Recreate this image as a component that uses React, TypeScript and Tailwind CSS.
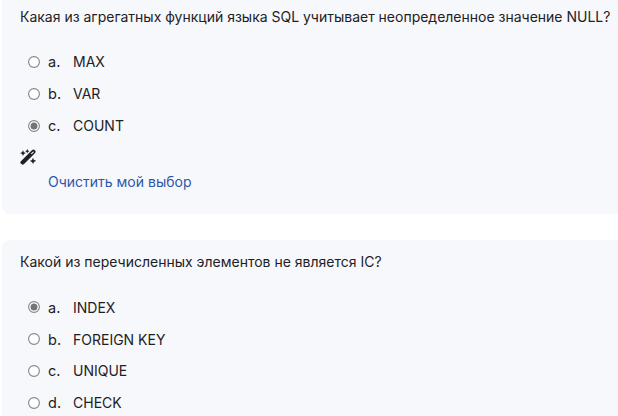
import React from "react";

type Option = { key: string; label: string; checked?: boolean; low?: boolean };

function Radio({ checked }: { checked?: boolean }) {
  return (
    <svg viewBox="0 0 12 12" className="size-3 shrink-0">
      <circle cx="6" cy="6" r="5.4" fill="#fff" stroke="#858585" strokeWidth="1.1" />
      {checked && <circle cx="6" cy="6" r="3.5" fill="#757575" />}
    </svg>
  );
}

function Row({ option }: { option: Option }) {
  const pad = option.low ? "pt-[2px]" : "pt-0";
  return (
    <div className="flex h-[32px] items-center pl-2">
      <Radio checked={option.checked} />
      <span className={`ml-2 w-[25px] text-[14.5px] ${pad}`}>{option.key}.</span>
      <span className={pad}>{option.label}</span>
    </div>
  );
}

function Wand() {
  return (
    <svg viewBox="0 0 16 16" className="size-4" fill="#1d2125">
      <path d="M2.6 13.4 13.4 2.8" stroke="#1d2125" strokeWidth="4.2" strokeLinecap="round" />
      <path d="m11.6 4.7 1.6-1.5" stroke="#f7f8fc" strokeWidth="1.1" strokeLinecap="round" />
      <path d="m3 1.2.9 2 2 .9-2 .9L3 7l-.9-2-2-.9 2-.9ZM7.3.1l.7 1.4 1.4.7-1.4.7-.7 1.4-.7-1.4-1.4-.7 1.4-.7ZM13 8.7l1 2.2 2.1 1-2.1 1-1 2.2-1-2.2-2.2-1 2.2-1Z" />
    </svg>
  );
}

const first: Option[] = [
  { key: "a", label: "MAX" },
  { key: "b", label: "VAR" },
  { key: "c", label: "COUNT", checked: true },
];
const second: Option[] = [
  { key: "a", label: "INDEX", checked: true, low: true },
  { key: "b", label: "FOREIGN KEY", low: true },
  { key: "c", label: "UNIQUE" },
  { key: "d", label: "CHECK" },
];

export default function App() {
  return (
    <main className="flex h-[416px] w-[618px] flex-col gap-[26px] overflow-hidden bg-white pl-[2px] font-['Inter',sans-serif] text-[14px] leading-6 text-[#1d2125]">
      <section className="h-[214px] shrink-0 rounded-bl-lg bg-[#f7f8fc] pl-[18px] pt-[5px]">
        <p className="whitespace-nowrap tracking-[-0.005px]">Какая из агрегатных функций языка SQL учитывает неопределенное значение NULL?</p>
        <div className="mt-[17px]">{first.map((o) => <Row key={o.key} option={o} />)}</div>
        <div className="mt-[7px]"><Wand /></div>
        <a className="ml-7 mt-[5px] block text-[#2f56a8]">Очистить мой выбор</a>
      </section>
      <section className="h-[176px] shrink-0 rounded-tl-lg bg-[#f7f8fc] pl-[18px] pt-[10px]">
        <p>Какой из перечисленных элементов не является IC?</p>
        <div className="mt-[17px]">{second.map((o) => <Row key={o.key} option={o} />)}</div>
      </section>
    </main>
  );
}
